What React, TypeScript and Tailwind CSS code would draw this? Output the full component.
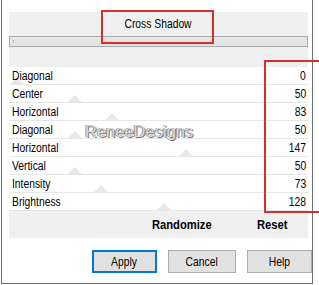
import React from "react";

const rows: { label: string; value: number }[] = [
  { label: "Diagonal", value: 0 },
  { label: "Center", value: 50 },
  { label: "Horizontal", value: 83 },
  { label: "Diagonal", value: 50 },
  { label: "Horizontal", value: 147 },
  { label: "Vertical", value: 50 },
  { label: "Intensity", value: 73 },
  { label: "Brightness", value: 128 },
];

function Thumb({ value }: { value: number }) {
  const left = 1 + value * 1.15;
  return (
    <svg
      className="absolute bottom-0"
      style={{ left }}
      width="14"
      height="7"
      viewBox="0 0 14 7"
    >
      <polygon points="0,7 7,0 14,7" fill="#e9e9e9" />
    </svg>
  );
}

export default function App() {
  return (
    <div className="relative w-[319px] h-[285px] bg-white text-black font-['Liberation_Sans',Arial,sans-serif] overflow-hidden">
      <div className="ml-px w-[312px] h-[284px] border-l border-r border-b border-[#6e6e6e] bg-white flex flex-col">
        <div className="pt-3 pl-[7px]">
          <div className="w-[299px] h-[226px] bg-[#f0f0f0] flex flex-col">
            <div className="h-6 flex items-center justify-center text-[12px]">
              <span className="inline-block scale-x-[0.86] origin-center">Cross Shadow</span>
            </div>
            <div className="h-[11px] border border-[#ababab] bg-[#e4e4e4] relative">
              <div className="absolute left-[3px] top-[3px] w-px h-[3px] bg-[#b5b5b5]" />
            </div>
            <div className="mt-5 flex flex-col">
              {rows.map((r, i) => (
                <div
                  key={i}
                  className="relative h-[18px] bg-white border-b border-[#e6e6e6] flex items-center justify-between pl-[3px] pr-[2px] text-[12px]"
                >
                  <Thumb value={r.value} />
                  <span className="relative inline-block scale-x-[0.86] origin-left">{r.label}</span>
                  <span className="relative inline-block scale-x-[0.86] origin-right">{r.value}</span>
                </div>
              ))}
            </div>
            <div className="flex-1 flex items-center text-[13px] font-bold">
              <span className="ml-[143px] inline-block scale-x-[0.86] origin-left">Randomize</span>
              <span className="ml-[36px] inline-block scale-x-[0.86] origin-left">Reset</span>
            </div>
          </div>
        </div>
        <div className="flex-1 flex items-center justify-end gap-[11px] pt-[2px] text-[12px]">
          <button className="w-[65px] h-[23px] bg-[#e1e1e1] border-2 border-[#0078d7] flex items-center justify-center">
            <span className="inline-block scale-x-[0.86]">Apply</span>
          </button>
          <button className="w-[68px] h-[23px] bg-[#e1e1e1] border border-[#adadad] flex items-center justify-center">
            <span className="inline-block scale-x-[0.86]">Cancel</span>
          </button>
          <button className="w-[65px] h-[23px] bg-[#e1e1e1] border border-[#adadad] flex items-center justify-center">
            <span className="inline-block scale-x-[0.86]">Help</span>
          </button>
        </div>
      </div>

      {/* watermark */}
      <div className="absolute left-[85px] top-[119px] text-[16.5px] text-[#d8d8d8] [text-shadow:1px_1px_0_#7a7a7a,-1px_0_0_#9a9a9a] pointer-events-none">
        ReneeDesigns
      </div>

      {/* annotation boxes */}
      <div className="absolute left-[101px] top-[10px] w-[113px] h-[34px] border-2 border-[#d3302c]" />
      <div className="absolute left-[264px] top-[60px] w-[60px] h-[153px] border-2 border-[#d3302c]" />
    </div>
  );
}
